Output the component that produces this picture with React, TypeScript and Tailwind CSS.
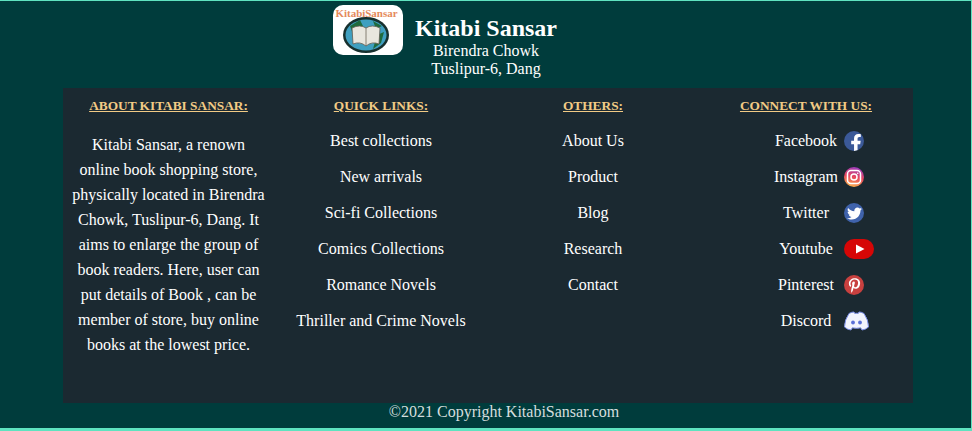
import React from 'react';
import { FaFacebookF, FaTwitter, FaPinterestP } from 'react-icons/fa';

const about =
  'Kitabi Sansar, a renown online book shopping store, physically located in Birendra Chowk, Tuslipur-6, Dang. It aims to enlarge the group of book readers. Here, user can put details of Book , can be member of store, buy online books at the lowest price.';

const quickLinks = [
  'Best collections',
  'New arrivals',
  'Sci-fi Collections',
  'Comics Collections',
  'Romance Novels',
  'Thriller and Crime Novels',
];

const others = ['About Us', 'Product', 'Blog', 'Research', 'Contact'];

const Logo = () => (
  <div className="flex h-[50px] w-[70px] items-center justify-center rounded-[10px] bg-white">
    <svg width="70" height="50" viewBox="0 0 70 50">
      <ellipse cx="33" cy="30" rx="23" ry="18" fill="#17302e" />
      <ellipse cx="33" cy="30" rx="20.5" ry="15.5" fill="#3f9fc0" />
      <path d="M17 21 L27 15 L30 21 L20 29Z M40 44 L48 38 L51 27 L44 30Z M40 16 L49 21 L43 24Z" fill="#1f6b3d" />
      <path d="M19 23 Q27 19 33 23 Q39 19 47 23 L46 39 Q39 36 33 41 Q27 36 20 39Z" fill="#e9e6de" stroke="#5f5a50" strokeWidth="0.8" />
      <path d="M33 23 V41" stroke="#6d6558" strokeWidth="0.8" />
      <text x="33.5" y="12" textAnchor="middle" textLength="62" lengthAdjust="spacingAndGlyphs" fontFamily="Liberation Serif, serif" fontSize="10" fontWeight="700" fill="#e58a5c">
        KitabiSansar
      </text>
    </svg>
  </div>
);

const Instagram = () => (
  <svg width="20" height="20" viewBox="0 0 20 20">
    <defs>
      <linearGradient id="ig" x1="0.35" y1="1" x2="0.6" y2="0">
        <stop offset="0" stopColor="#fdb44b" />
        <stop offset="0.5" stopColor="#e8475f" />
        <stop offset="1" stopColor="#9a3bc0" />
      </linearGradient>
    </defs>
    <circle cx="10" cy="10" r="10" fill="url(#ig)" />
    <rect x="3.5" y="3.5" width="13" height="13" rx="3.5" fill="none" stroke="#fff" strokeWidth="1.5" />
    <circle cx="10" cy="10" r="3" fill="none" stroke="#fff" strokeWidth="1.5" />
    <circle cx="13.7" cy="6.3" r="0.8" fill="#fff" />
  </svg>
);

const Youtube = () => (
  <svg width="30" height="20" viewBox="0 0 30 20">
    <rect width="30" height="20" rx="10" fill="#d60606" />
    <path d="M12 5.5 L20.5 10 L12 14.5Z" fill="#fff" />
  </svg>
);

const Discord = () => (
  <svg width="25" height="20" viewBox="0 0 25 20">
    <path
      d="M5 2.5 Q8 .8 10 1 L10.8 2.4 Q12.5 2.1 14.2 2.4 L15 1 Q17 .8 20 2.5 Q24.5 9 24.5 16 Q21.5 18.8 18 19 L16.6 16.8 Q12.5 17.8 8.4 16.8 L7 19 Q3.5 18.8 .5 16 Q.5 9 5 2.5Z"
      fill="#f2f4fd"
      stroke="#7a8ee8"
      strokeWidth="1"
    />
    <circle cx="9" cy="11.5" r="1.9" fill="#5a70d8" />
    <circle cx="16" cy="11.5" r="1.9" fill="#5a70d8" />
  </svg>
);

const Round = ({ bg, children }: { bg: string; children: React.ReactNode }) => (
  <span className={`flex h-5 w-5 items-center justify-center overflow-hidden rounded-full text-white ${bg}`}>{children}</span>
);

const social: { name: string; icon: React.ReactNode }[] = [
  { name: 'Facebook', icon: <Round bg="bg-[#3b5998]"><FaFacebookF className="mt-1 ml-1 text-[18px]" /></Round> },
  { name: 'Instagram', icon: <Instagram /> },
  { name: 'Twitter', icon: <Round bg="bg-[#3f62ab]"><FaTwitter className="text-[15px]" /></Round> },
  { name: 'Youtube', icon: <Youtube /> },
  { name: 'Pinterest', icon: <Round bg="bg-[#c8403f]"><FaPinterestP className="text-[15px]" /></Round> },
  { name: 'Discord', icon: <Discord /> },
];

const Heading = ({ children }: { children: React.ReactNode }) => (
  <h3 className="text-center text-[13.33px] leading-[15px] font-bold text-[#f2cb85] underline">{children}</h3>
);

export default function App() {
  return (
    <footer className="flex h-[431px] flex-col border-t border-r border-b-[3px] border-[#5fe3c0] bg-[#003c3c] font-['Liberation_Serif',serif] text-white">
      {/* Brand */}
      <div className="flex h-[87px] justify-center pt-1 pr-[81px]">
        <Logo />
        <div className="ml-3 flex w-[142px] flex-col items-center">
          <h1 className="mt-[9px] text-[24px] leading-[28px] font-bold whitespace-nowrap">Kitabi Sansar</h1>
          <p className="text-[16px] leading-[18px] whitespace-nowrap">Birendra Chowk</p>
          <p className="text-[16px] leading-[18px] whitespace-nowrap">Tuslipur-6, Dang</p>
        </div>
      </div>

      {/* Columns */}
      <div className="mr-[58px] ml-[63px] grid h-[315px] grid-cols-4 bg-[#1b2931] pt-[10px] pr-[2px] text-[16px]">
        <div className="flex flex-col items-center pr-[1px]">
          <Heading>ABOUT KITABI SANSAR:</Heading>
          <p className="mt-[19px] w-[196px] text-center leading-[25px]">{about}</p>
        </div>
        <div className="flex flex-col">
          <Heading>QUICK LINKS:</Heading>
          <ul className="mt-[10px] flex flex-col">
            {quickLinks.map((l) => (
              <li key={l} className="flex h-9 items-center justify-center">{l}</li>
            ))}
          </ul>
        </div>
        <div className="flex flex-col">
          <Heading>OTHERS:</Heading>
          <ul className="mt-[10px] flex flex-col">
            {others.map((l) => (
              <li key={l} className="flex h-9 items-center justify-center">{l}</li>
            ))}
          </ul>
        </div>
        <div className="flex flex-col pl-[2px]">
          <Heading>CONNECT WITH US:</Heading>
          <ul className="mt-[10px] flex flex-col">
            {social.map((s) => (
              <li key={s.name} className="grid h-9 grid-cols-[1fr_76px_1fr] items-center">
                <span className="col-start-2 text-center whitespace-nowrap">{s.name}</span>
                <span className="col-start-3">{s.icon}</span>
              </li>
            ))}
          </ul>
        </div>
      </div>

      {/* Copyright */}
      <p className="pl-[37px] text-center text-[16px] leading-[18px] text-[#d5dede]">©2021 Copyright KitabiSansar.com</p>
    </footer>
  );
}
